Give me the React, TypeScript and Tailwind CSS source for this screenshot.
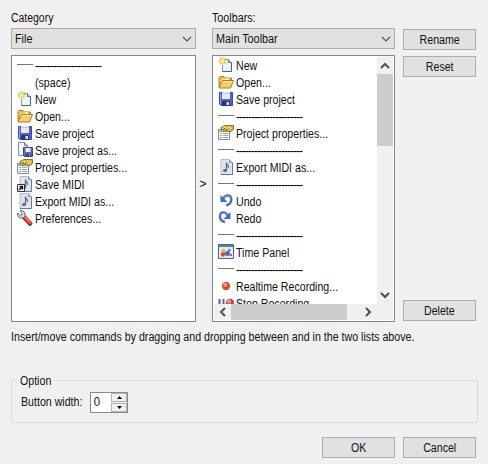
import type { ReactNode } from "react";

type IconName =
  | "new" | "open" | "save" | "saveAs" | "props" | "saveMidi" | "midi"
  | "prefs" | "undo" | "redo" | "time" | "record" | "stop" | "none" | "line";

function Page() {
  return (
    <>
      <path d="M4.500 2.500h6l3 3v9h-9z" fill="#eef3fb" stroke="#8b9bbb" />
      <path d="M13.500 5.500v9h-9" fill="none" stroke="#4b5f88" />
      <path d="M10.500 2.500v3h3" fill="#b9c8e2" stroke="#5a6c92" />
    </>
  );
}

function Note() {
  return (
    <>
      <path d="M3 .5h8.500l3 3v12H3z" fill="#dde4ed" stroke="#b3bccb" />
      <path d="M14.500 4v11.500H3" fill="none" stroke="#68788f" />
      <path d="M11.500.5v3h3" fill="#c1cddd" stroke="#8796ab" />
      <path d="M8.500 3.500v8" stroke="#56677e" strokeWidth="1.300" />
      <path d="M8.500 4c.3 2 2.700 2 2 5" fill="none" stroke="#60738a" strokeWidth="1.200" />
      <ellipse cx="7" cy="11.500" rx="2" ry="1.500" fill="#56677e" />
    </>
  );
}

const ICONS: Record<IconName, ReactNode> = {
  none: null,
  line: <path d="M0 7.500h16" stroke="#747474" />,
  new: (
    <>
      <Page />
      <path d="M4.500 0v8M.5 4h8M1.500 1l6 6M7.500 1l-6 6" stroke="#e8cf45" strokeWidth="1.300" />
      <circle cx="4.500" cy="4" r="1.700" fill="#fff8b0" />
    </>
  ),
  open: (
    <>
      <path d="M1 13.500V3.500l1-1h4l1.500 1.500h6V7" fill="#e9bd50" stroke="#a67c29" />
      <path d="M2.500 6L11 3.500V7L4 11z" fill="#fff1bd" />
      <path d="M1 14L4.500 6.500h11L12.500 14z" fill="#f7cf69" stroke="#a67c29" />
      <path d="M5 7.500h9" stroke="#ffe8a2" />
    </>
  ),
  save: (
    <>
      <path d="M1.500 1.500h13v13H3l-1.500-1.500z" fill="#5560c4" stroke="#4049a0" />
      <path d="M4 1h8v7H4z" fill="#e6ebfb" />
      <path d="M4 2.500h8" stroke="#bdc8ed" />
      <path d="M4 10h8v5H4z" fill="#2c3572" />
      <path d="M8.500 11h2.500v3H8.500z" fill="#dde4ff" />
      <path d="M2.500 2v11" stroke="#9099e6" />
    </>
  ),
  saveAs: (
    <>
      <path d="M1.500.5h6l3 3v10h-9z" fill="#f2f5fb" stroke="#8290ab" />
      <path d="M7.500.5v3h3" fill="#bdcbe1" stroke="#6c7fa3" />
      <path d="M6.500 5.500h9v9H7.500l-1-1z" fill="#5b64bd" stroke="#3c458f" />
      <path d="M8.500 6h5v4h-5z" fill="#e8edff" />
      <path d="M9 12h5v3H9z" fill="#343e73" />
      <path d="M12 12.500h1V14h-1z" fill="#fff" />
    </>
  ),
  props: (
    <>
      <path d="M.5 4.500h11v10H.5z" fill="#fbfcfe" stroke="#7c8ca8" />
      <path d="M1 6h10" stroke="#7899cb" strokeWidth="1.500" />
      <path d="M2 8.500h2m1 0h5M2 10.500h2m1 0h5M2 12.500h2m1 0h5" stroke="#9aa5b6" />
      <path d="M3 2.500L7 .5h8.500v4L12 7 8 5.500 5.500 7 4 5.500z" fill="#deb74a" stroke="#8b7027" />
      <path d="M5 3.500l2-1.500 2 2 2-2 2 1.500" fill="none" stroke="#fff0a2" />
      <path d="M5 5l2-2m1 2l1.500-1.500" stroke="#44452d" />
    </>
  ),
  midi: <Note />,
  saveMidi: (
    <>
      <Note />
      <path d="M.5 8.500h7v7h-7z" fill="#fff" stroke="#333" />
      <path d="M2 14l3.500-3.500M2.500 10.500h3v3" fill="none" stroke="#111" strokeWidth="1.400" />
    </>
  ),
  prefs: (
    <>
      <path d="M7 7l6 6.500" stroke="#9e221b" strokeWidth="4.600" strokeLinecap="round" />
      <path d="M7 6.500l6 6.500" stroke="#e74f3c" strokeWidth="3" strokeLinecap="round" />
      <path d="M8 6.500l5 5.500" stroke="#ffac98" />
      <path d="M3.500.5h2L8 3v3L6 8H3L.5 5.500V3L3 5h1.500L5 3.500z" fill="#d6dadd" stroke="#687077" />
    </>
  ),
  undo: (
    <>
      <path d="M5 6C8 .5 13.300 2 13.300 6.500c0 3-2 5-5 6" fill="none" stroke="#4673b8" strokeWidth="2.400" />
      <path d="M6 5c3-3.500 6-1.500 6.500.5" fill="none" stroke="#8fb4e3" />
      <path d="M2.500 2v7h7z" fill="#3d70b8" />
    </>
  ),
  redo: (
    <>
      <path d="M10 6C7 .5 2 2 2 6.500c0 3 2 5 5 5.500" fill="none" stroke="#4673b8" strokeWidth="2.400" />
      <path d="M9 5C6 1.500 3 3.500 3 6" fill="none" stroke="#8fb4e3" />
      <path d="M12.500 2v7h-7z" fill="#3d70b8" />
    </>
  ),
  time: (
    <>
      <path d="M.5.5h15v14H.5z" fill="#e4edfa" stroke="#496395" />
      <path d="M1 2h14" stroke="#5b7eb9" strokeWidth="2" />
      <path d="M10 5l3.500 1L10 8z" fill="#3f68b9" />
      <circle cx="5.500" cy="7" r="2.200" fill="#f0bb37" />
      <circle cx="5" cy="10.500" r="2.300" fill="#d84d3a" />
      <circle cx="9.500" cy="9.500" r="2.500" fill="#3f6dba" />
      <path d="M12 11h2" stroke="#d84d3a" strokeWidth="2" />
    </>
  ),
  record: (
    <>
      <circle cx="8" cy="8" r="4.200" fill="#c75636" />
      <circle cx="7.200" cy="6.800" r="2" fill="#eda083" />
    </>
  ),
  stop: (
    <>
      <path d="M1.500 4v10M5.500 4v10" stroke="#5265ad" strokeWidth="2" />
      <circle cx="12" cy="8" r="4.300" fill="#b95342" />
      <circle cx="11" cy="6.500" r="2" fill="#dda093" />
    </>
  ),
};

const DASHES = "----------------------";

const CATEGORY: [IconName, string][] = [
  ["line", DASHES], ["none", "(space)"], ["new", "New"], ["open", "Open..."],
  ["save", "Save project"], ["saveAs", "Save project as..."], ["props", "Project properties..."],
  ["saveMidi", "Save MIDI"], ["midi", "Export MIDI as..."], ["prefs", "Preferences..."],
];

const TOOLBAR: [IconName, string][] = [
  ["new", "New"], ["open", "Open..."], ["save", "Save project"], ["line", DASHES],
  ["props", "Project properties..."], ["line", DASHES], ["midi", "Export MIDI as..."],
  ["line", DASHES], ["undo", "Undo"], ["redo", "Redo"], ["line", DASHES],
  ["time", "Time Panel"], ["line", DASHES], ["record", "Realtime Recording..."],
  ["stop", "Stop Recording"],
];

function Rows({ items }: { items: [IconName, string][] }) {
  return (
    <ul>
      {items.map(([icon, label], i) => (
        <li key={i} className="flex h-[17px] items-start gap-[2px] pl-[5px]">
          <svg viewBox="0 0 16 16" className="h-4 w-4 shrink-0">{ICONS[icon]}</svg>
          <span
            className={
              icon === "line"
                ? "translate-y-px tracking-[-0.996px] text-black"
                : "origin-left translate-y-px scale-x-[0.885] whitespace-nowrap"
            }
          >
            {label}
          </span>
        </li>
      ))}
    </ul>
  );
}

function Arrow({ rotate, thin = false }: { rotate: string; thin?: boolean }) {
  return (
    <svg viewBox="0 0 10 10" className={`h-[10px] w-[10px] ${rotate}`}>
      <path d="M1 3l4 4 4-4" fill="none" stroke="#505050" strokeWidth={thin ? 1.1 : 2} />
    </svg>
  );
}

function Select({ value }: { value: string }) {
  return (
    <button className="flex h-[21px] w-full items-center justify-between border border-[#acacac] bg-[#e1e1e1] pr-[3px] pl-[3px]">
      <span className="origin-left translate-y-px scale-x-[0.9]">{value}</span>
      <Arrow rotate="" thin />
    </button>
  );
}

function Button({ children }: { children: ReactNode }) {
  return (
    <button className="flex h-[21px] w-[73px] shrink-0 items-center justify-center border border-[#adadad] bg-[#e1e1e1]">
      <span className="translate-y-px scale-x-[0.885]">{children}</span>
    </button>
  );
}

export default function App() {
  return (
    <main className="flex h-[464px] w-[488px] flex-col overflow-hidden bg-[#f0f0f0] pt-[10px] pl-[11px] font-['Liberation_Sans',Arial,sans-serif] text-[12px] leading-[17px] text-[#111]">
      <div className="flex h-[312px]">
        <section className="w-[185px]">
          <h2 className="mb-px h-[17px] origin-left scale-x-[0.87]">Category</h2>
          <Select value="File" />
          <div className="mt-[6px] h-[267px] border border-[#828790] bg-white pt-px">
            <Rows items={CATEGORY} />
          </div>
        </section>
        <div className="flex w-4 justify-center pt-[166px] pr-[2px]">&gt;</div>
        <section className="w-[183px]">
          <h2 className="mb-px h-[17px] origin-left scale-x-[0.895]">Toolbars:</h2>
          <Select value="Main Toolbar" />
          <div className="mt-[6px] flex h-[267px] flex-col border border-[#828790] bg-white p-px">
            <div className="flex h-[247px]">
              <div className="-ml-px w-[164px] overflow-hidden">
                <Rows items={TOOLBAR} />
              </div>
              <div className="flex w-4 flex-col items-center bg-[#f0f0f0]">
                <div className="flex h-[17px] items-center"><Arrow rotate="rotate-180" /></div>
                <div className="h-[72px] w-full bg-[#cdcdcd]" />
                <div className="mt-auto flex h-[19px] items-center"><Arrow rotate="" /></div>
              </div>
            </div>
            <div className="flex h-4 items-center bg-[#f0f0f0]">
              <div className="flex w-[17px] justify-center"><Arrow rotate="rotate-90" /></div>
              <div className="h-full w-[116px] bg-[#cdcdcd]" />
              <div className="ml-[16px]"><Arrow rotate="-rotate-90" /></div>
            </div>
          </div>
        </section>
        <aside className="ml-2 flex flex-col pt-[19px]">
          <Button>Rename</Button>
          <div className="mt-[6px]"><Button>Reset</Button></div>
          <div className="mt-[223px]"><Button>Delete</Button></div>
        </aside>
      </div>
      <p className="mt-[7px] h-[17px] origin-left scale-x-[0.888] whitespace-nowrap">
        Insert/move commands by dragging and dropping between and in the two lists above.
      </p>
      <fieldset className="mt-[26px] h-[51px] w-[467px] border border-[#dcdcdc] pl-[9px]">
        <legend className="-ml-[4px] h-[17px] w-[36px] pl-[3px]">
          <span className="inline-block origin-left translate-y-px scale-x-[0.885]">Option</span>
        </legend>
        <div className="mt-[3px] flex h-[21px] items-center">
          <label className="w-[69px] origin-left scale-x-[0.885] whitespace-nowrap">Button width:</label>
          <div className="flex h-[21px] w-[38px] border border-[#8a8a8a] bg-white">
            <span className="w-5 origin-left scale-x-[0.95] pt-px pl-[3px]">0</span>
            <div className="flex w-4 flex-col gap-px bg-[#f0f0f0]">
              <span className="flex h-[9px] items-center justify-center border border-[#b2b2b2]">
                <svg viewBox="0 0 5 3" className="h-[3px] w-[5px]"><path d="M0 3L2.500 0 5 3z" /></svg>
              </span>
              <span className="flex h-[9px] items-center justify-center border border-[#b2b2b2]">
                <svg viewBox="0 0 5 3" className="h-[3px] w-[5px]"><path d="M0 0h5L2.500 3z" /></svg>
              </span>
            </div>
          </div>
        </div>
      </fieldset>
      <div className="mt-[14px] flex gap-2 pl-[311px]">
        <Button>OK</Button>
        <Button>Cancel</Button>
      </div>
    </main>
  );
}
